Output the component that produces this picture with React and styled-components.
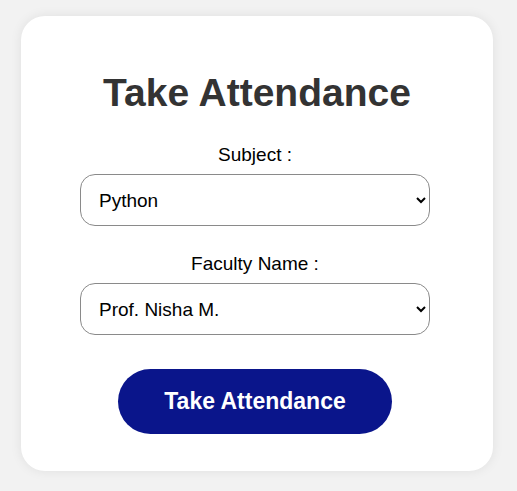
import React, { useState } from 'react';
import styled, { createGlobalStyle } from 'styled-components';

const GlobalStyle = createGlobalStyle`
  html, body {
    margin: 0;
    padding: 0;
    background: #f2f2f2;
    font-family: "Liberation Sans", Arial, sans-serif;
  }
`;

const Page = styled.div`
  padding: 16px 0 20px 21px;
`;

const Card = styled.div`
  width: 472px;
  height: 455px;
  box-sizing: border-box;
  background: #ffffff;
  border-radius: 24px;
  box-shadow: 0 0 12px rgba(0, 0, 0, 0.08);
  padding: 55px 4px 0 0;
  display: flex;
  flex-direction: column;
  align-items: center;
`;

const Title = styled.h1`
  margin: 0 0 29px 4px;
  font-size: 39px;
  line-height: 44px;
  font-weight: 700;
  color: #333333;
`;

const Field = styled.div`
  display: flex;
  flex-direction: column;
  align-items: center;
  gap: 9px;
  margin-bottom: ${(p) => p.$gap || 0}px;
`;

const Label = styled.label`
  font-size: 19px;
  line-height: 21px;
  color: #000000;
`;

const Select = styled.select`
  width: 350px;
  height: 52px;
  box-sizing: border-box;
  border: 1px solid #8a8a8a;
  border-radius: 15px;
  background: #ffffff;
  padding: 0 10px 0 14px;
  font-family: "Liberation Sans", Arial, sans-serif;
  font-size: 19px;
  color: #000000;
  outline: none;
`;

const Button = styled.button`
  margin-top: 34px;
  width: 274px;
  height: 65px;
  border: none;
  border-radius: 33px;
  background: #0a158b;
  color: #ffffff;
  font-family: "Liberation Sans", Arial, sans-serif;
  font-size: 23px;
  font-weight: 700;
  cursor: pointer;
`;

const App = () => {
  const [subject, setSubject] = useState('Python');
  const [faculty, setFaculty] = useState('Prof. Nisha M.');

  return (
    <>
      <GlobalStyle />
      <Page>
        <Card>
          <Title>Take Attendance</Title>
          <Field $gap={27}>
            <Label htmlFor="subject">Subject :</Label>
            <Select id="subject" value={subject} onChange={(e) => setSubject(e.target.value)}>
              <option>Python</option>
              <option>Java</option>
              <option>DBMS</option>
            </Select>
          </Field>
          <Field>
            <Label htmlFor="faculty">Faculty Name :</Label>
            <Select id="faculty" value={faculty} onChange={(e) => setFaculty(e.target.value)}>
              <option>Prof. Nisha M.</option>
              <option>Prof. Rahul K.</option>
            </Select>
          </Field>
          <Button>Take Attendance</Button>
        </Card>
      </Page>
    </>
  );
};

export default App;
